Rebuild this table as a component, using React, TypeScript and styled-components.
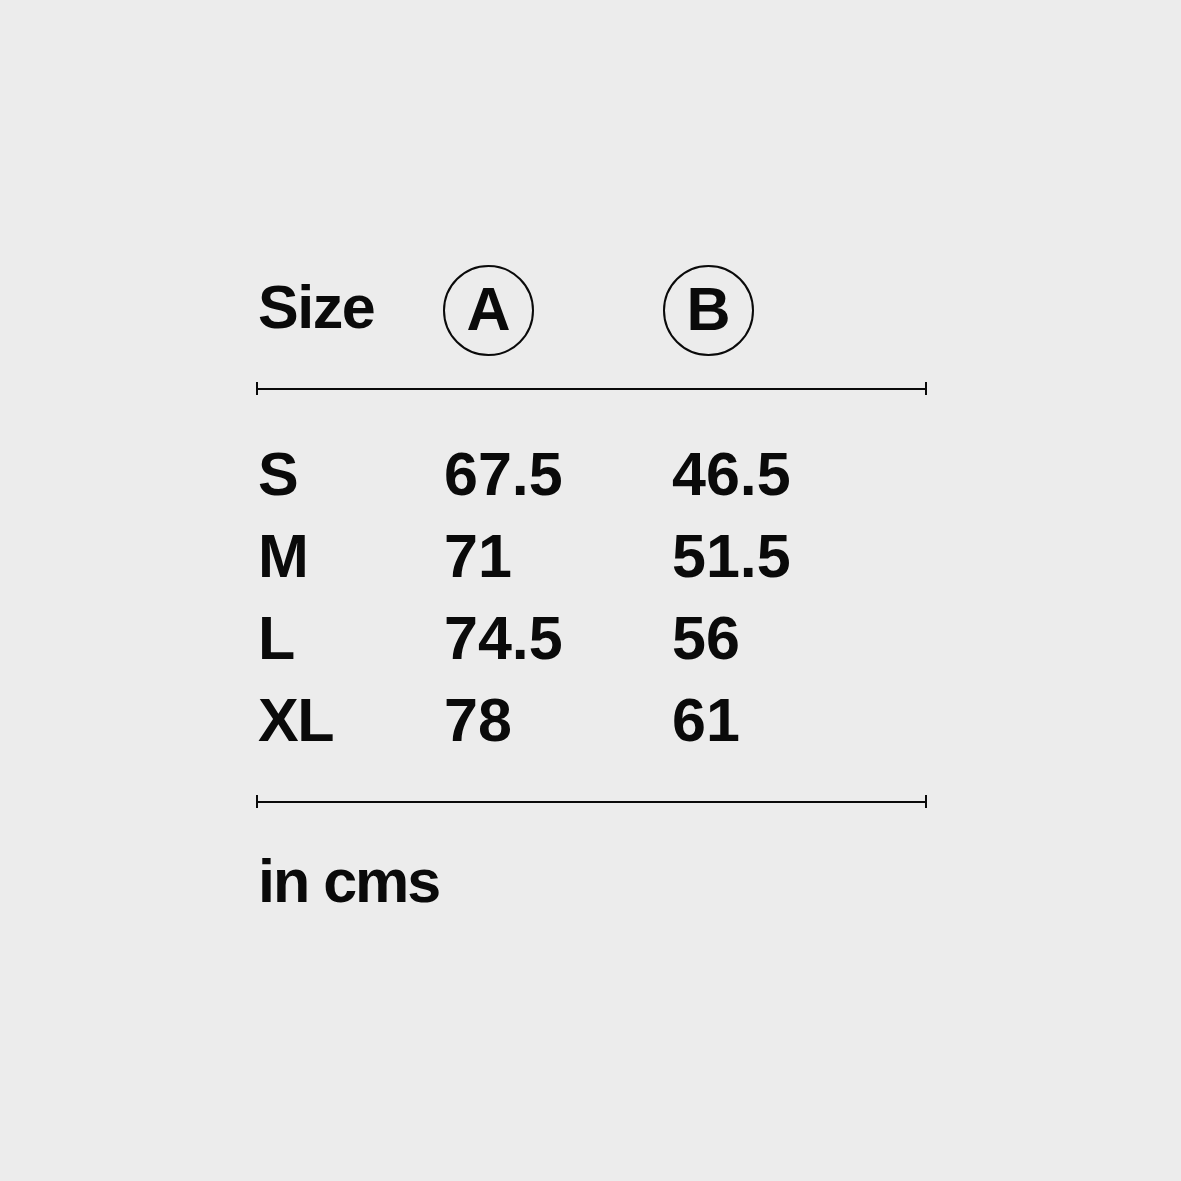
import styled, { createGlobalStyle } from 'styled-components';

const GlobalStyle = createGlobalStyle`
  html, body {
    margin: 0;
    padding: 0;
    background: #ececec;
  }
  body {
    font-family: "Liberation Sans", Arial, sans-serif;
    color: #0a0a0a;
  }
`;

const Page = styled.div`
  width: 1181px;
  height: 1181px;
  box-sizing: border-box;
  padding: 265px 0 0 256px;
  background: #ececec;
`;

const Chart = styled.div`
  width: 671px;
  display: flex;
  flex-direction: column;
`;

const Header = styled.div`
  display: flex;
  align-items: center;
  height: 91px;
  padding-left: 2px;
`;

const Label = styled.span<{ $width?: number; $tight?: boolean }>`
  display: inline-block;
  width: ${(p) => (p.$width ? `${p.$width}px` : 'auto')};
  font-size: 61px;
  font-weight: 700;
  letter-spacing: ${(p) => (p.$tight ? '-1.5px' : '0')};
  line-height: 82px;
  white-space: nowrap;
`;

const HeaderLabel = styled(Label)`
  line-height: 91px;
  margin-top: -7px;
`;

const Badge = styled.div<{ $gap: number }>`
  width: 91px;
  height: 91px;
  box-sizing: border-box;
  border: 2px solid #0a0a0a;
  border-radius: 50%;
  display: flex;
  align-items: center;
  justify-content: center;
  margin-right: ${(p) => p.$gap}px;
  flex-shrink: 0;
`;

const BadgeLetter = styled.span`
  font-size: 61px;
  font-weight: 700;
  line-height: 1;
  margin-top: -2px;
`;

const Rule = styled.div<{ $top: number }>`
  display: flex;
  align-items: center;
  height: 13px;
  margin-top: ${(p) => p.$top}px;
`;

const Tick = styled.span`
  width: 2px;
  height: 13px;
  background: #0a0a0a;
`;

const Bar = styled.span`
  flex: 1;
  height: 2px;
  background: #0a0a0a;
`;

const Rows = styled.div`
  display: flex;
  flex-direction: column;
  padding-left: 2px;
  margin-top: 38px;
`;

const Row = styled.div`
  display: grid;
  grid-template-columns: 186px 228px 1fr;
`;

const Note = styled(Label)`
  margin-top: 32px;
  padding-left: 2px;
  letter-spacing: -2px;
`;

const rows: [string, string, string][] = [
  ['S', '67.5', '46.5'],
  ['M', '71', '51.5'],
  ['L', '74.5', '56'],
  ['XL', '78', '61'],
];

export default function App() {
  return (
    <>
      <GlobalStyle />
      <Page>
        <Chart>
          <Header>
            <HeaderLabel $width={185} $tight>
              Size
            </HeaderLabel>
            <Badge $gap={129}>
              <BadgeLetter>A</BadgeLetter>
            </Badge>
            <Badge $gap={0}>
              <BadgeLetter>B</BadgeLetter>
            </Badge>
          </Header>
          <Rule $top={26}>
            <Tick />
            <Bar />
            <Tick />
          </Rule>
          <Rows>
            {rows.map(([size, a, b]) => (
              <Row key={size}>
                <Label $tight>{size}</Label>
                <Label>{a}</Label>
                <Label>{b}</Label>
              </Row>
            ))}
          </Rows>
          <Rule $top={34}>
            <Tick />
            <Bar />
            <Tick />
          </Rule>
          <Note>in cms</Note>
        </Chart>
      </Page>
    </>
  );
}
